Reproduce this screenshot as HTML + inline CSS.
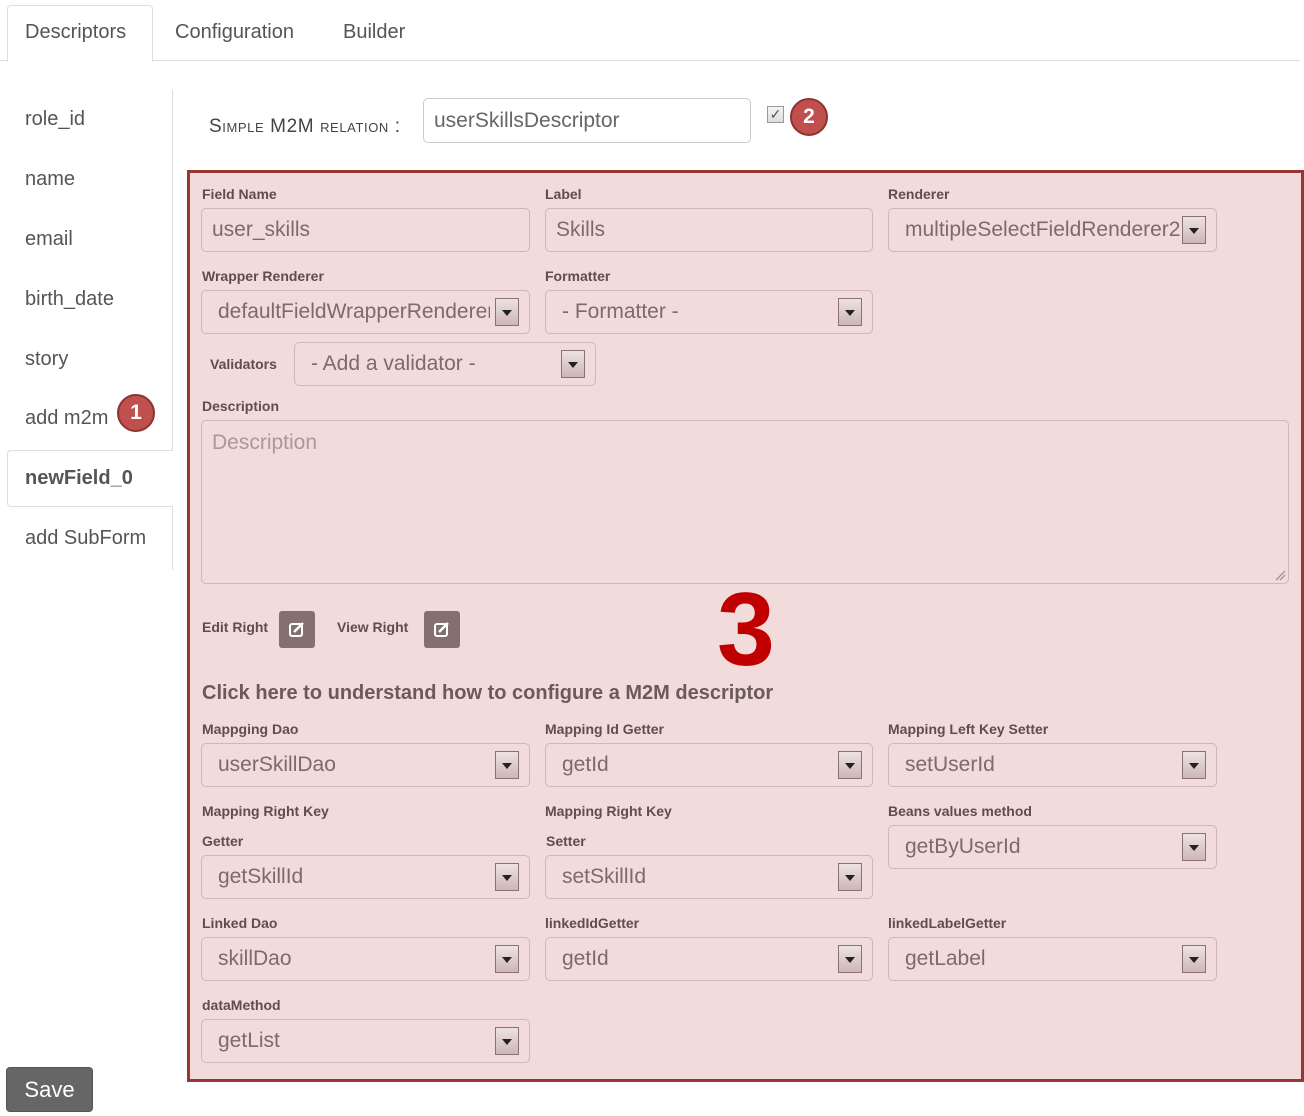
<!DOCTYPE html>
<html><head><meta charset="utf-8"><style>
*{box-sizing:border-box}
body{margin:0;width:1304px;height:1116px;background:#fff;font-family:"Liberation Sans",Arial,sans-serif;position:relative;overflow:hidden}
.a{position:absolute}
.tab{font-size:20px;color:#555}
.nav{position:absolute;left:25px;font-size:20px;color:#555}
.lbl{position:absolute;font-size:14px;font-weight:bold;color:#5e4e4e}
.in{position:absolute;height:44px;border:1px solid #cfb7b7;border-radius:5px;background:#f2dbdb;font-size:21px;color:#7d6a6a;padding:0 0 0 10px;line-height:42px;white-space:nowrap;overflow:hidden}
.sel{padding-left:16px}
.t{display:block;overflow:hidden;width:calc(100% - 30px)}
.arr{position:absolute;right:10px;top:7px;width:24px;height:28px;border:1px solid #8a7272;background:linear-gradient(#eee2e2,#cdb6b6)}
.arr:after{content:"";position:absolute;left:6px;top:11px;border-left:5px solid transparent;border-right:5px solid transparent;border-top:6px solid #222}
.badge{position:absolute;width:38px;height:38px;border-radius:50%;background:#c0504d;border:2px solid #8c3432;color:#fff;font-weight:bold;font-size:21px;text-align:center;line-height:34px}
.ic{position:absolute;width:36px;height:37px;border-radius:3px;background:#857070}
</style></head><body>
<div class="a" style="left:0;top:60px;width:1300px;height:1px;background:#ddd"></div>
<div class="a" style="left:7px;top:5px;width:146px;height:57px;border:1px solid #ddd;border-bottom:none;border-radius:4px 4px 0 0;background:#fff"></div>
<div class="a tab" style="left:25px;top:21px">Descriptors</div>
<div class="a tab" style="left:175px;top:21px">Configuration</div>
<div class="a tab" style="left:343px;top:21px">Builder</div>
<div class="a" style="left:172px;top:90px;width:1px;height:360px;background:#ddd"></div>
<div class="a" style="left:172px;top:506px;width:1px;height:64px;background:#ddd"></div>
<div class="nav" style="top:108px">role_id</div>
<div class="nav" style="top:168px">name</div>
<div class="nav" style="top:228px">email</div>
<div class="nav" style="top:288px">birth_date</div>
<div class="nav" style="top:348px">story</div>
<div class="nav" style="top:407px">add m2m</div>
<div class="badge" style="left:117px;top:394px">1</div>
<div class="a" style="left:7px;top:450px;width:166px;height:57px;border:1px solid #ddd;border-right:none;border-radius:4px 0 0 4px;background:#fff"></div>
<div class="nav" style="top:467px;font-weight:bold">newField_0</div>
<div class="nav" style="top:527px">add SubForm</div>
<div class="a" style="left:209px;top:116px;font-size:19px;letter-spacing:0.6px;color:#444;font-variant:small-caps">Simple M2M relation :</div>
<div class="a" style="left:423px;top:98px;width:328px;height:45px;border:1px solid #ccc;border-radius:5px;font-size:21px;color:#666;padding-left:10px;line-height:43px">userSkillsDescriptor</div>
<div class="a" style="left:767px;top:106px;width:17px;height:17px;border:1px solid #999;background:linear-gradient(#f4f4f4,#ddd);font-size:14px;line-height:15px;text-align:center;color:#555">✓</div>
<div class="badge" style="left:790px;top:98px">2</div>
<div class="a" style="left:187px;top:170px;width:1117px;height:912px;border:3px solid #953735;background:#f2dbdb"></div>
<div class="lbl" style="left:202px;top:186px">Field Name</div>
<div class="lbl" style="left:545px;top:186px">Label</div>
<div class="lbl" style="left:888px;top:186px">Renderer</div>
<div class="in" style="left:201px;top:208px;width:329px">user_skills</div>
<div class="in" style="left:545px;top:208px;width:328px">Skills</div>
<div class="in" style="left:888px;top:208px;width:329px;padding-left:16px"><span class="t" style="width:275px">multipleSelectFieldRenderer2</span><span class="arr"></span></div>
<div class="lbl" style="left:202px;top:268px">Wrapper Renderer</div>
<div class="lbl" style="left:545px;top:268px">Formatter</div>
<div class="in sel" style="left:201px;top:290px;width:329px"><span class="t" style="width:272px">defaultFieldWrapperRenderer</span><span class="arr"></span></div>
<div class="in sel" style="left:545px;top:290px;width:328px">- Formatter -<span class="arr"></span></div>
<div class="lbl" style="left:210px;top:356px">Validators</div>
<div class="in sel" style="left:294px;top:342px;width:302px">- Add a validator -<span class="arr"></span></div>
<div class="lbl" style="left:202px;top:398px">Description</div>
<div class="in" style="left:201px;top:420px;width:1088px;height:164px;line-height:44px;color:#a99">Description
<svg class="a" style="right:2px;bottom:2px" width="12" height="12"><path d="M2 11L11 2M6 11L11 6" stroke="#999" stroke-width="1.3"/></svg></div>
<div class="lbl" style="left:202px;top:619px">Edit Right</div>
<div class="ic" style="left:279px;top:611px"><svg width="36" height="37"><rect x="11" y="13" width="12" height="12" rx="2" fill="none" stroke="#fff" stroke-width="2"/><path d="M15 21l9-9" stroke="#fff" stroke-width="2.5"/></svg></div>
<div class="lbl" style="left:337px;top:619px">View Right</div>
<div class="ic" style="left:424px;top:611px"><svg width="36" height="37"><rect x="11" y="13" width="12" height="12" rx="2" fill="none" stroke="#fff" stroke-width="2"/><path d="M15 21l9-9" stroke="#fff" stroke-width="2.5"/></svg></div>
<div class="a" style="left:717px;top:570px;font-size:104px;font-weight:bold;color:#c00000;line-height:120px">3</div>
<div class="a" style="left:202px;top:682px;font-size:20px;font-weight:bold;color:#6a5a5a">Click here to understand how to configure a M2M descriptor</div>
<div class="lbl" style="left:202px;top:721px">Mappging Dao</div>
<div class="lbl" style="left:545px;top:721px">Mapping Id Getter</div>
<div class="lbl" style="left:888px;top:721px">Mapping Left Key Setter</div>
<div class="in sel" style="left:201px;top:743px;width:329px">userSkillDao<span class="arr"></span></div>
<div class="in" style="left:545px;top:743px;width:328px;padding-left:16px">getId<span class="arr"></span></div>
<div class="in" style="left:888px;top:743px;width:329px;padding-left:16px">setUserId<span class="arr"></span></div>
<div class="lbl" style="left:202px;top:803px">Mapping Right Key</div>
<div class="lbl" style="left:545px;top:803px">Mapping Right Key</div>
<div class="lbl" style="left:888px;top:803px">Beans values method</div>
<div class="lbl" style="left:202px;top:833px">Getter</div>
<div class="lbl" style="left:546px;top:833px">Setter</div>
<div class="in sel" style="left:201px;top:855px;width:329px">getSkillId<span class="arr"></span></div>
<div class="in sel" style="left:545px;top:855px;width:328px">setSkillId<span class="arr"></span></div>
<div class="in sel" style="left:888px;top:825px;width:329px">getByUserId<span class="arr"></span></div>
<div class="lbl" style="left:202px;top:915px">Linked Dao</div>
<div class="lbl" style="left:545px;top:915px">linkedIdGetter</div>
<div class="lbl" style="left:888px;top:915px">linkedLabelGetter</div>
<div class="in sel" style="left:201px;top:937px;width:329px">skillDao<span class="arr"></span></div>
<div class="in sel" style="left:545px;top:937px;width:328px">getId<span class="arr"></span></div>
<div class="in sel" style="left:888px;top:937px;width:329px">getLabel<span class="arr"></span></div>
<div class="lbl" style="left:202px;top:997px">dataMethod</div>
<div class="in sel" style="left:201px;top:1019px;width:329px">getList<span class="arr"></span></div>
<div class="a" style="left:6px;top:1067px;width:87px;height:45px;background:#666;border:1px solid #555;border-radius:4px;color:#fff;font-size:22px;text-align:center;line-height:43px">Save</div>
</body></html>
